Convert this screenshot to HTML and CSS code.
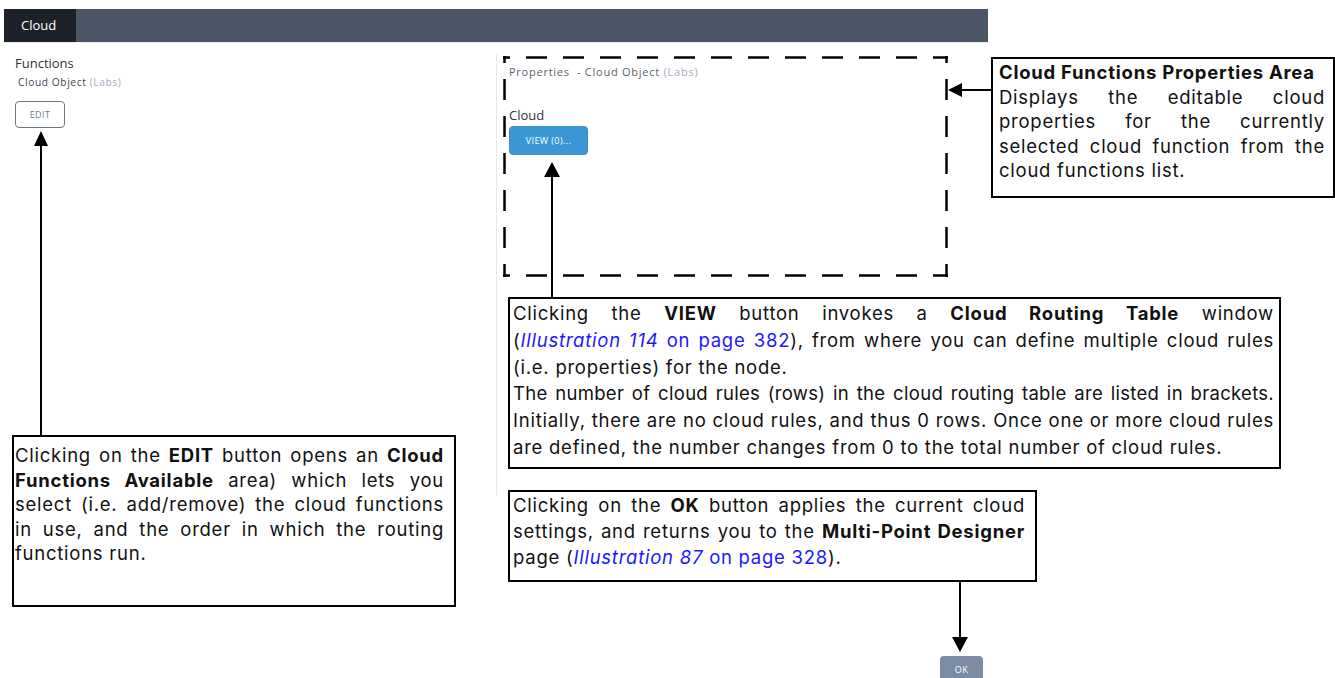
FILE: index.html
```html
<!DOCTYPE html>
<html lang="en">
<head>
<meta charset="utf-8">
<title>Cloud Functions</title>
<link rel="stylesheet" href="styles.css">
</head>
<body>
<div class="page">
  <div class="app">
    <header class="tabs">
      <div class="tab active">Cloud</div>
      <div class="tab-rest"></div>
    </header>
    <div class="panes">
      <section class="functions">
        <h2 class="fn-title">Functions</h2>
        <div class="fn-item">Cloud Object <span class="labs">(Labs)</span></div>
        <button class="btn btn-edit">EDIT</button>
      </section>
      <section class="props">
        <div class="props-title">Properties&nbsp; - Cloud Object <span class="labs">(Labs)</span></div>
        <div class="prop-label">Cloud</div>
        <button class="btn btn-view">VIEW (0)...</button>
      </section>
    </div>
    <footer class="app-foot">
      <button class="btn btn-ok">OK</button>
    </footer>
  </div>

  <svg class="annot-lines" width="1335" height="678" viewBox="0 0 1335 678">
    <g stroke="#000" stroke-width="2.5" fill="none" stroke-dasharray="21 16" stroke-dashoffset="14">
      <line x1="503" y1="57.5" x2="948" y2="57.5"/>
      <line x1="503" y1="275.5" x2="948" y2="275.5"/>
      <line x1="504.5" y1="56" x2="504.5" y2="277"/>
      <line x1="946.5" y1="56" x2="946.5" y2="277"/>
    </g>
    <g stroke="#000" stroke-width="2">
      <line x1="958" y1="90" x2="992" y2="90"/>
      <line x1="552" y1="174" x2="552" y2="298"/>
      <line x1="41" y1="144" x2="41" y2="436"/>
      <line x1="960" y1="581" x2="960" y2="640"/>
    </g>
    <g fill="#000">
      <polygon points="948,90 962,83 962,97"/>
      <polygon points="552,162 544,177 560,177"/>
      <polygon points="41,131 34,146 48,146"/>
      <polygon points="960,652 952,637 968,637"/>
    </g>
  </svg>

  <div class="callout c-props">
    <span class="l end"><b>Cloud Functions Properties Area</b></span>
    <span class="l">Displays the editable cloud</span>
    <span class="l">properties for the currently</span>
    <span class="l">selected cloud function from the</span>
    <span class="l end">cloud functions list.</span>
  </div>

  <div class="callout c-view">
    <span class="l">Clicking the <b>VIEW</b> button invokes a <b>Cloud Routing Table</b> window</span>
    <span class="l">(<a class="xref"><i>Illustration 114</i> on page 382</a>), from where you can define multiple cloud rules</span>
    <span class="l end">(i.e. properties) for the node.</span>
    <span class="l tight">The number of cloud rules (rows) in the cloud routing table are listed in brackets.</span>
    <span class="l">Initially, there are no cloud rules, and thus 0 rows. Once one or more cloud rules</span>
    <span class="l end">are defined, the number changes from 0 to the total number of cloud rules.</span>
  </div>

  <div class="callout c-edit">
    <span class="l">Clicking on the <b>EDIT</b> button opens an <b>Cloud</b></span>
    <span class="l"><b>Functions Available</b> area) which lets you</span>
    <span class="l">select (i.e. add/remove) the cloud functions</span>
    <span class="l">in use, and the order in which the routing</span>
    <span class="l end">functions run.</span>
  </div>

  <div class="callout c-ok">
    <span class="l">Clicking on the <b>OK</b> button applies the current cloud</span>
    <span class="l">settings, and returns you to the <b>Multi-Point Designer</b></span>
    <span class="l end">page (<a class="xref"><i>Illustration 87</i> on page 328</a>).</span>
  </div>
</div>
</body>
</html>
```

FILE: styles.css
```css
* { box-sizing: border-box; }

html, body {
  margin: 0;
  padding: 0;
  background: #ffffff;
}

.page {
  position: relative;
  width: 1335px;
  height: 678px;
  overflow: hidden;
  font-family: "Open Sans", "Noto Sans", sans-serif;
}

/* ---------- application UI ---------- */
.app {
  margin: 9px 0 0 4px;
  width: 984px;
}

.tabs {
  display: flex;
  height: 34px;
  background: #4a5566;
  border-bottom: 1px solid #e9ebef;
}

.tab {
  height: 33px;
  line-height: 33px;
  font-size: 13px;
  color: #ffffff;
}

.tab.active {
  width: 72px;
  padding-left: 17px;
  background: #1c212b;
}

.tab-rest { flex: 1; }

.panes {
  display: grid;
  grid-template-columns: 492px 1fr;
  margin-top: 11px;
  height: 441px;
}

.functions {
  padding: 1px 0 0 11px;
}

.fn-title {
  margin: 0;
  font-size: 13px;
  font-weight: 400;
  line-height: 17px;
  color: #2d3340;
}

.fn-item {
  margin-top: 3px;
  padding-left: 3px;
  font-size: 10.2px;
  letter-spacing: 0.6px;
  line-height: 14px;
  color: #3f4654;
}

.labs { color: #a3adbd; }

.btn {
  display: flex;
  align-items: center;
  justify-content: center;
  font-family: "Open Sans", "Noto Sans", sans-serif;
  font-size: 9px;
  letter-spacing: 0.4px;
  border-radius: 4px;
  cursor: pointer;
}

.btn-edit {
  margin-top: 12px;
  width: 50px;
  height: 27px;
  background: #ffffff;
  border: 1.5px solid #6e7a8c;
  color: #6e7a8c;
}

.props {
  border-left: 1px solid #e6e8ec;
  padding: 11px 0 0 12px;
}

.props-title {
  font-size: 11px;
  letter-spacing: 0.75px;
  line-height: 14px;
  color: #5b6473;
}

.prop-label {
  margin-top: 29px;
  font-size: 13px;
  line-height: 15px;
  color: #2d3340;
}

.btn-view {
  margin-top: 3px;
  width: 79px;
  height: 29px;
  background: #3a97d3;
  border: 1px solid #3a8fc6;
  color: #ffffff;
}

.app-foot {
  display: flex;
  justify-content: flex-end;
  padding-right: 5px;
  margin-top: 161px;
}

.btn-ok {
  width: 43px;
  height: 26px;
  background: #7a8ba2;
  border: none;
  color: #ffffff;
  font-size: 9px;
}

/* ---------- annotation overlay ---------- */
.annot-lines {
  position: absolute;
  left: 0;
  top: 0;
  pointer-events: none;
}

.callout {
  position: absolute;
  background: #ffffff;
  border: 2px solid #000000;
  padding: 1px 8px 0 3px;
  font-family: "Inter", "Noto Sans", sans-serif;
  font-size: 18.5px;
  letter-spacing: 0.75px;
  line-height: 24.5px;
  color: #111111;
}

.callout b { font-weight: 700; }

.l {
  display: block;
  text-align: justify;
  text-align-last: justify;
}

.l.end { text-align-last: left; }

.l.tight { letter-spacing: 0.3px; }

.xref {
  color: #1a1aff;
  text-decoration: none;
}

.c-props { left: 991px; top: 57px; width: 344px; height: 141px; padding-left: 6px; }
.c-view  { left: 508px; top: 297px; width: 773px; height: 172px; line-height: 26.8px; padding-right: 5px; }
.c-edit  { left: 12px;  top: 435px; width: 444px; height: 172px; padding-top: 6px; padding-left: 1px; padding-right: 10px; }
.c-ok    { left: 508px; top: 490px; width: 529px; height: 92px; padding-top: 0; line-height: 26px; padding-right: 10px; }
```
